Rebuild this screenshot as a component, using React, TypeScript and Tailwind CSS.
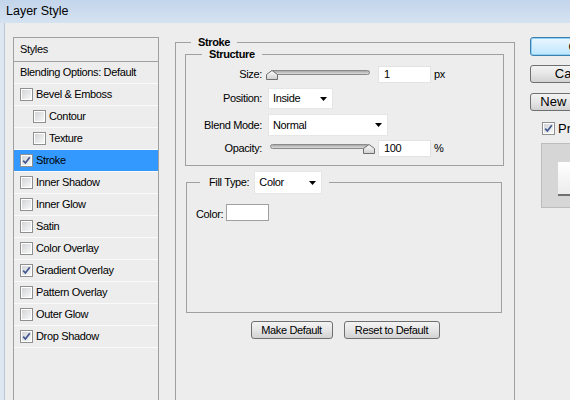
import React from "react";

const FONT = "font-['Liberation_Sans',Arial,sans-serif]";

function Check({ checked }: { checked?: boolean }) {
  return (
    <span className="flex h-[13px] w-[13px] shrink-0 border border-[#8e8f8f] bg-white p-[1px]">
      <span className="flex flex-1 items-center justify-center bg-linear-to-br from-[#d3d5d8] to-[#f7f7f7]">
        {checked && (
          <svg width="9" height="9" viewBox="0 0 9 9">
            <path d="M1.2 4.6 L3.4 7 L7.8 1.2" fill="none" stroke="#3f5690" strokeWidth="1.7" />
          </svg>
        )}
      </span>
    </span>
  );
}

type Row = { label: string; checked?: boolean; indent?: boolean; selected?: boolean };
const rows: Row[] = [
  { label: "Bevel & Emboss" },
  { label: "Contour", indent: true },
  { label: "Texture", indent: true },
  { label: "Stroke", checked: true, selected: true },
  { label: "Inner Shadow" },
  { label: "Inner Glow" },
  { label: "Satin" },
  { label: "Color Overlay" },
  { label: "Gradient Overlay", checked: true },
  { label: "Pattern Overlay" },
  { label: "Outer Glow" },
  { label: "Drop Shadow", checked: true },
];

function Slider({ right }: { right?: boolean }) {
  return (
    <div className="relative h-[11px] w-[108px] shrink-0">
      <div className="absolute left-[3px] right-[5px] top-[1px] h-[5px] rounded-full border border-[#8a8a8a] bg-linear-to-b from-[#a9a9a9] to-[#dcdcdc]" />
      <svg
        className={right ? "absolute right-0 top-[1px]" : "absolute left-[-1px] top-[1px]"}
        width="12"
        height="10"
        viewBox="0 0 12 10"
      >
        <defs>
          <linearGradient id={right ? "tg2" : "tg1"} x1="0" y1="0" x2="0" y2="1">
            <stop offset="0" stopColor="#ffffff" />
            <stop offset="1" stopColor="#cfcfcf" />
          </linearGradient>
        </defs>
        <path
          d="M6 0.5 L11.5 4.5 L11.5 9.5 L0.5 9.5 L0.5 4.5 Z"
          fill={`url(#${right ? "tg2" : "tg1"})`}
          stroke="#6e6e6e"
          strokeWidth="1"
        />
      </svg>
    </div>
  );
}

function Select({ value, w, h }: { value: string; w: string; h: string }) {
  return (
    <div className={`flex ${w} ${h} shrink-0 items-center justify-between border border-[#e6e6e6] bg-white pl-[4px] pr-[5px] text-black`}>
      <span>{value}</span>
      <svg width="7" height="4" viewBox="0 0 7 4">
        <path d="M0 0 H7 L3.5 4 Z" fill="#000" />
      </svg>
    </div>
  );
}

function Field({ value }: { value: string }) {
  return (
    <div className="flex h-[17px] w-[53px] shrink-0 items-center border border-[#e3e3e3] bg-white pl-[5px] text-black">
      {value}
    </div>
  );
}

function Btn({ label, w }: { label: string; w: string }) {
  return (
    <div
      className={`flex h-[18px] ${w} items-center justify-center rounded-[3px] border border-[#707070] bg-linear-to-b from-[#f3f3f3] via-[#e6e6e6] to-[#d2d2d2] text-black`}
    >
      {label}
    </div>
  );
}

export default function App() {
  return (
    <div className={`${FONT} flex h-[400px] w-[570px] flex-col overflow-hidden bg-[#ededed] text-[11px] tracking-[-0.35px] text-black`}>
      {/* Title bar */}
      <div className="flex h-[23px] shrink-0 items-center bg-linear-to-b from-[#c3d5eb] to-[#d5e2f1] pl-[6px] text-[12.5px] tracking-normal text-black">
        Layer Style
      </div>

      <div className="flex flex-1">
        {/* window frame */}
        <div className="w-[5px] shrink-0 border-r border-[#b8c6d6] bg-[#dde7f2]" />

        <div className="ml-[8px] flex flex-1 pt-[14px]">
          {/* Styles list */}
          <div className="flex h-[400px] w-[146px] shrink-0 flex-col border border-[#a0a0a0]">
            <div className="flex h-[24px] shrink-0 items-center border-b border-[#a0a0a0] pl-[6px]">Styles</div>
            <div className="flex h-[22px] shrink-0 items-center border-b border-[#fafafa] pl-[6px]">
              Blending Options: Default
            </div>
            {rows.map((r) => (
              <div
                key={r.label}
                className={`flex h-[22px] shrink-0 items-center gap-[3px] border-b border-[#fafafa] ${
                  r.indent ? "pl-[19px]" : "pl-[6px]"
                } ${r.selected ? "bg-[#3399ff]" : ""}`}
              >
                <Check checked={r.checked} />
                <span>{r.label}</span>
              </div>
            ))}
          </div>

          {/* Stroke panel */}
          <div className="ml-[16px] flex w-[340px] shrink-0 flex-col">
            <fieldset className="h-[380px] border border-[#a0a0a0]">
              <legend className="ml-[15px] px-[7px] text-[11px] font-bold leading-[10px]">Stroke</legend>

              <fieldset className="ml-[9px] mr-[10px] mt-[2px] border border-[#a0a0a0]">
                <legend className="ml-[16px] px-[7px] font-bold leading-[10px]">Structure</legend>
                <div className="flex flex-col pb-[8px] pt-[7px]">
                  <div className="flex h-[17px] items-center">
                    <span className="w-[76px] text-right">Size:</span>
                    <span className="ml-[5px]">
                      <Slider />
                    </span>
                    <span className="ml-[3px]">
                      <Field value="1" />
                    </span>
                    <span className="ml-[3px]">px</span>
                  </div>
                  <div className="mt-[5px] flex h-[21px] items-center">
                    <span className="w-[76px] text-right">Position:</span>
                    <span className="ml-[6px]">
                      <Select value="Inside" w="w-[65px]" h="h-[21px]" />
                    </span>
                  </div>
                  <div className="mt-[5px] flex h-[22px] items-center">
                    <span className="w-[76px] text-right">Blend Mode:</span>
                    <span className="ml-[6px]">
                      <Select value="Normal" w="w-[120px]" h="h-[22px]" />
                    </span>
                  </div>
                  <div className="mt-[4px] flex h-[17px] items-center">
                    <span className="w-[76px] text-right">Opacity:</span>
                    <span className="ml-[5px]">
                      <Slider right />
                    </span>
                    <span className="ml-[3px]">
                      <Field value="100" />
                    </span>
                    <span className="ml-[3px]">%</span>
                  </div>
                </div>
              </fieldset>

              <fieldset className="ml-[10px] mr-[12px] mt-[5px] border border-[#a0a0a0]">
                <legend className="ml-[13px] flex items-center pl-[9px] pr-[7px]">
                  <span className="mr-[5px]">Fill Type:</span>
                  <Select value="Color" w="w-[68px]" h="h-[23px]" />
                </legend>
                <div className="flex h-[118px] items-start pl-[9px] pt-[10px]">
                  <span className="mt-[2px]">Color:</span>
                  <span className="ml-[3px] h-[17px] w-[43px] border border-[#a0a0a0] bg-white" />
                </div>
              </fieldset>

              <div className="mt-[8px] flex justify-center gap-[11px]">
                <Btn label="Make Default" w="w-[82px]" />
                <Btn label="Reset to Default" w="w-[96px]" />
              </div>
            </fieldset>
          </div>

          {/* Right column */}
          <div className="ml-[15px] flex w-[90px] shrink-0 flex-col text-[13px] tracking-normal">
            <div className="flex h-[19px] items-center justify-center rounded-[3px] border border-[#3c7fb1] bg-linear-to-b from-[#eaf6fd] to-[#bee6fd] pl-[6px] shadow-[inset_0_0_0_1px_#8fd0f3]">
              OK
            </div>
            <div className="mt-[9px] flex h-[18px] items-center justify-center rounded-[3px] border border-[#707070] bg-linear-to-b from-[#f3f3f3] via-[#e6e6e6] to-[#d2d2d2]">
              Cancel
            </div>
            <div className="mt-[10px] flex h-[18px] items-center justify-center rounded-[3px] border border-[#707070] bg-linear-to-b from-[#f3f3f3] via-[#e6e6e6] to-[#d2d2d2]">
              New Style...
            </div>
            <div className="ml-[12px] mt-[11px] flex h-[13px] items-center gap-[3px]">
              <Check checked />
              <span>Preview</span>
            </div>
            <div className="ml-[11px] mt-[8px] flex h-[65px] border border-[#bdbdbd] bg-[#d6d6d6] pl-[16px] pt-[18px]">
              <div className="h-[34px] w-[40px] border-b-2 border-[#6f6f6f] bg-linear-to-b from-white to-[#ececec]" />
            </div>
          </div>
        </div>
      </div>
    </div>
  );
}
